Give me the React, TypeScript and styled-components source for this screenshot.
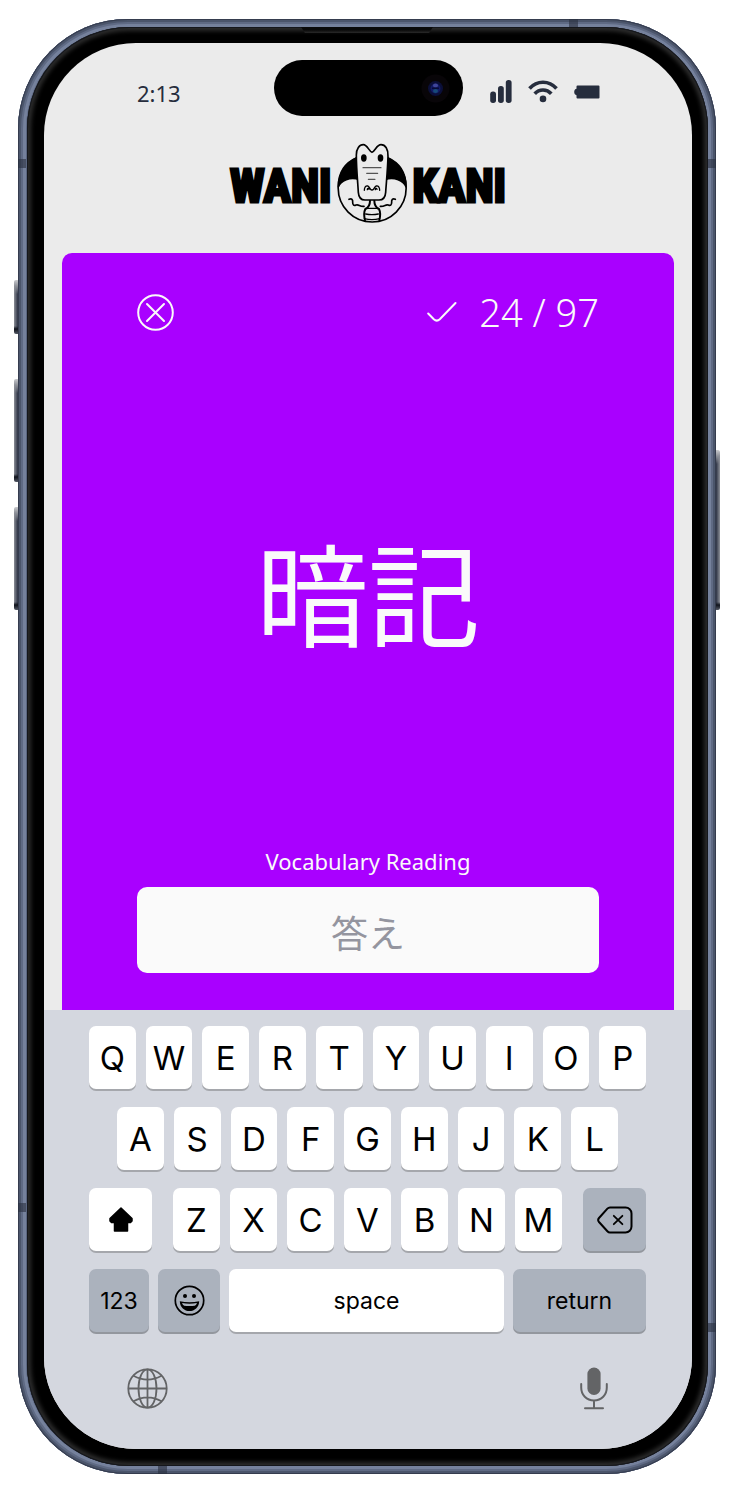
import React from "react";
import styled, { createGlobalStyle } from "styled-components";

const GlobalStyle = createGlobalStyle`
  *, *::before, *::after { box-sizing: border-box; }
  html, body { margin: 0; background: #fff; }
  body { font-family: "Noto Sans", "Noto Sans CJK JP", sans-serif; }
  button, input { font: inherit; border: 0; margin: 0; padding: 0; }
  h1, p { margin: 0; font-weight: 400; }
  svg { display: block; }
`;

const Page = styled.div`
  display: flex;
  min-height: 100vh;
  padding: 19px 19px 26px 18px;
`;

/* ---------- device ---------- */

const Frame = styled.div`
  position: relative;
  flex: 1;
  display: flex;
  padding: 8px 8px 8px 9px;
  border-radius: 110px;
  background: #5b6680;
  box-shadow:
    inset 0 0 0 1px #353c4e,
    inset 0 0 0 3px #4b556b,
    inset 0 0 0 5px #5f6a84,
    inset 0 0 0 8px #75819c;
`;

const Bezel = styled.div`
  flex: 1;
  display: flex;
  padding: 16px 16px 17px 17px;
  border-radius: 102px;
  background: #000;
  box-shadow:
    inset 0 0 0 1px #15171c,
    inset 0 0 4px 4px #2c2c2c;
`;

const Screen = styled.div`
  flex: 1;
  min-width: 0;
  display: flex;
  flex-direction: column;
  overflow: hidden;
  border-radius: 92px;
  background: #ebebeb;
`;

const SideButton = styled.span<{ $side: "left" | "right"; $top: number; $length: number }>`
  position: absolute;
  ${(p) => p.$side}: -4px;
  top: ${(p) => p.$top}px;
  width: 4px;
  height: ${(p) => p.$length}px;
  border-radius: ${(p) => (p.$side === "left" ? "2px 0 0 2px" : "0 2px 2px 0")};
  background: linear-gradient(
      to bottom,
      #c9cacd 0,
      #8d9098 6px,
      transparent 14px,
      transparent calc(100% - 8px),
      #10131c calc(100% - 5px),
      #555a66 100%
    ),
    linear-gradient(to ${(p) => p.$side}, #2c3244, #8c8f97);
`;

const SideBand = styled.span<{ $side: "left" | "right"; $top: number }>`
  position: absolute;
  ${(p) => p.$side}: 0;
  top: ${(p) => p.$top}px;
  width: 8px;
  height: 9px;
  background: rgba(40, 46, 62, 0.6);
`;

const EdgeBand = styled.span<{ $edge: "top" | "bottom"; $left: number }>`
  position: absolute;
  ${(p) => p.$edge}: 0;
  left: ${(p) => p.$left}%;
  width: 9px;
  height: 8px;
  background: rgba(40, 46, 62, 0.6);
`;

const Earpiece = styled.span`
  position: absolute;
  top: 8px;
  left: 50%;
  width: 132px;
  height: 6px;
  transform: translateX(-50%);
  clip-path: polygon(0 0, 100% 0, 97% 100%, 3% 100%);
  background: linear-gradient(#0a0a0a 50%, #2a2a2a);
`;

/* ---------- status bar ---------- */

const StatusBar = styled.header`
  display: grid;
  grid-template-columns: 1fr 189px 1fr;
  align-items: center;
  padding: 17px 92px 0 93px;
  color: #262d3d;
`;

const Clock = styled.time`
  padding-top: 10px;
  font-size: 22px;
  line-height: 32px;
`;

const Island = styled.div`
  display: flex;
  align-items: center;
  justify-content: flex-end;
  height: 56px;
  padding-right: 13px;
  border-radius: 28px;
  background: #000;
`;

const StatusIcons = styled.div`
  display: flex;
  align-items: center;
  justify-content: flex-end;
  gap: 16px;
  padding-top: 7px;
`;

/* ---------- logo ---------- */

const Logo = styled.h1`
  display: flex;
  align-items: center;
  justify-content: center;
  gap: 4px;
  padding: 26px 0 29px;
`;

const LogoWord = styled.span`
  padding-top: 6px;
  font-family: "Roboto Condensed", "Open Sans Condensed", "Noto Sans CJK JP", sans-serif;
  font-size: 46px;
  font-weight: 700;
  line-height: 48px;
  color: #000;
  -webkit-text-stroke: 3px #000;
  stroke-linejoin: round;
`;

/* ---------- review card ---------- */

const Card = styled.main`
  flex: 1;
  display: flex;
  flex-direction: column;
  margin: 0 18px;
  padding: 41px 75px 37px;
  border-radius: 10px 10px 0 0;
  background: #a900ff;
  color: #fafafa;
`;

const CardHeader = styled.div`
  display: flex;
  align-items: center;
  justify-content: space-between;
  height: 36px;
`;

const CloseButton = styled.button`
  background: none;
  color: inherit;
  cursor: pointer;
`;

const Progress = styled.p`
  display: flex;
  align-items: center;
  gap: 22px;
  font-size: 38px;
  font-weight: 300;
  line-height: 36px;
`;

const Prompt = styled.p`
  flex: 1;
  display: flex;
  align-items: center;
  justify-content: center;
  padding-top: 4px;
  font-family: "Noto Sans CJK JP", sans-serif;
  font-size: 112px;
  line-height: 120px;
`;

const AnswerLabel = styled.label`
  margin-bottom: 11px;
  font-size: 22px;
  line-height: 30px;
  text-align: center;
`;

const AnswerInput = styled.input`
  width: 100%;
  height: 86px;
  padding-top: 4px;
  border-radius: 10px;
  background: #fafafa;
  color: #262d3d;
  font-family: "Noto Sans CJK JP", sans-serif;
  font-size: 37px;
  text-align: center;
  outline: none;
  &::placeholder {
    color: #94959f;
    opacity: 1;
  }
`;

/* ---------- keyboard ---------- */

const Keyboard = styled.section`
  display: flex;
  flex-direction: column;
  gap: 18px;
  padding: 16px 46px 39px 45px;
  background: #d4d7df;
  font-family: Inter, sans-serif;
`;

const KeyRow = styled.div<{ $inset?: number; $gap?: number }>`
  display: flex;
  gap: ${(p) => p.$gap ?? 10}px;
  padding: 0 ${(p) => p.$inset ?? 0}px;
`;

const LetterGroup = styled.div`
  flex: 1;
  display: flex;
  gap: 10px;
`;

const Key = styled.button<{ $width?: number; $dark?: boolean; $word?: boolean }>`
  flex: ${(p) => (p.$width ? `0 0 ${p.$width}px` : "1 1 0")};
  min-width: 0;
  display: flex;
  align-items: center;
  justify-content: center;
  height: 63px;
  border-radius: 7px;
  background: ${(p) => (p.$dark ? "#abb2bd" : "#fff")};
  box-shadow: 0 2px 0 ${(p) => (p.$dark ? "#93979e" : "#a5a7ac")};
  color: #000;
  font-size: ${(p) => (p.$word ? 23 : 33)}px;
  cursor: pointer;
`;

const KeyboardFooter = styled.div`
  display: flex;
  align-items: center;
  justify-content: space-between;
  padding: 17px 38px 0;
`;

const IconButton = styled.button`
  background: none;
  color: #636466;
  cursor: pointer;
`;

/* ---------- drawings ---------- */

const Camera = () => (
  <svg width="29" height="29" viewBox="0 0 29 29" aria-hidden="true">
    <circle cx="14.500" cy="14.500" r="14" fill="#080508" />
    <circle cx="14.500" cy="14.500" r="7.500" fill="#0b0f38" />
    <circle cx="14.500" cy="14.500" r="5" fill="#121a66" />
    <ellipse cx="14.500" cy="11.500" rx="2.500" ry="2" fill="#40469a" />
    <ellipse cx="14.500" cy="17" rx="2.500" ry="2" fill="#174a78" />
    <rect x="11" y="13.500" width="7" height="1.500" fill="#080b38" />
  </svg>
);

const SignalIcon = () => (
  <svg width="22" height="23" viewBox="0 0 22 23" fill="currentColor" aria-hidden="true">
    <rect x="0.200" y="11.500" width="5.800" height="11.500" rx="2.700" />
    <rect x="8" y="6" width="5.800" height="17" rx="2.700" />
    <rect x="15.800" y="0" width="5.800" height="23" rx="2.700" />
  </svg>
);

const WifiIcon = () => (
  <svg width="30" height="23" viewBox="0 0 30 23" fill="none" stroke="currentColor" strokeWidth="3.600" aria-hidden="true">
    <path d="M1.500 8.500C9 .2 21 .2 28.500 8.500" />
    <path d="M6.700 13.800c4.600-5 12-5 16.600 0" />
    <circle cx="15" cy="18.900" r="3.300" fill="currentColor" stroke="none" />
  </svg>
);

const BatteryIcon = () => (
  <svg width="26" height="14" viewBox="0 0 26 14" fill="currentColor" aria-hidden="true">
    <path d="M3.500 0.500H24.500a1 1 0 0 1 1 1v11a1 1 0 0 1-1 1H3.500a1 1 0 0 1-1-1V10.200C1.200 10 .2 8.800 .2 7s1-3 2.300-3.200V1.500a1 1 0 0 1 1-1Z" />
  </svg>
);

const Crocodile = () => (
  <svg width="73" height="82" viewBox="350 36 219 246" fill="none" stroke="#000" strokeWidth="5" strokeLinecap="round" strokeLinejoin="round" aria-hidden="true">
    <circle cx="458.500" cy="174" r="102" fill="#ebebeb" />
    <path d="M357 170C357 125 377 98 412 83l8 66C392 138 364 153 357 170Z" fill="#000" />
    <path d="M560 170C560 125 540 98 505 83l-8 66c28-11 56 4 63 21Z" fill="#000" />
    <path d="M389 208c8-4 12 1 11 9 0 9 4 11 10 8 9-3 10 5 24 4M528 208c-8-4-12 1-11 9 0 9-4 11-10 8-9-3-10 5-24 4" />
    <path d="M452 212c0 12-3 20-14 25-5 10-4 22-1 34M465 212c0 12 3 20 14 25 5 10 4 22 1 34" strokeWidth="6" />
    <path d="M441 235h35M439 252q19 4 38 0M435 266q23 6 46 0" strokeWidth="4" />
    <path d="M411 75C411 56 420 44 432 44c12 0 17 20 26 23 9-3 14-23 27-23 13 0 22 13 21 35-1 38-5 78-7 108-1 16-8 23-20 23h-42c-13 0-19-8-20-23-2-33-6-74-6-112Z" fill="#ebebeb" />
    <ellipse cx="433.500" cy="84" rx="6" ry="8.500" fill="#000" />
    <ellipse cx="483.500" cy="84" rx="6" ry="8.500" fill="#000" />
    <path d="M431 113h54M442 130h33M447 148h20" stroke="#555" strokeWidth="3.500" />
    <path d="M435 181c0-9 4-14 10-13 6 1 7 13 13 12 6 1 7-11 13-12 6-1 10 4 10 13M444 179c0-5 4-5 5-1M468 179c0-5 4-5 5-1" strokeWidth="4" />
  </svg>
);

const CloseIcon = () => (
  <svg width="37" height="37" viewBox="0 0 37 37" fill="none" stroke="currentColor" strokeWidth="2" strokeLinecap="round" aria-hidden="true">
    <circle cx="18.500" cy="18.500" r="17.300" />
    <path d="M10 10l17 17M27 10 10 27" />
  </svg>
);

const CheckIcon = () => (
  <svg width="30" height="22" viewBox="0 0 30 22" fill="none" stroke="currentColor" strokeWidth="2" strokeLinecap="round" aria-hidden="true">
    <path d="M1.200 12.500 6.800 18.300Q9.800 21 12.800 18.300L28.500 2" />
  </svg>
);

const ShiftIcon = () => (
  <svg width="24" height="25" viewBox="0 0 24 25" aria-hidden="true">
    <path d="M12 1 23 11.500V14L21.500 15.500H18.500V24H5.500V15.500H2.500L1 14V11.500Z" stroke="#000" strokeWidth="1.500" strokeLinejoin="round" />
  </svg>
);

const DeleteIcon = () => (
  <svg width="36" height="28" viewBox="0 0 36 28" fill="none" stroke="currentColor" strokeWidth="2" strokeLinecap="round" strokeLinejoin="round" aria-hidden="true">
    <path d="M13 1.500H28.500a6 6 0 0 1 6 6v13a6 6 0 0 1-6 6H13Q11.500 26.500 10.400 25.300L2 16Q.3 14 2 12L10.400 2.700Q11.500 1.500 13 1.500Z" />
    <path d="M16.800 9.800l8.600 8.400M25.400 9.800l-8.600 8.400" strokeWidth="1.800" />
  </svg>
);

const SmileIcon = () => (
  <svg width="31" height="31" viewBox="0 0 31 31" aria-hidden="true">
    <circle cx="15.500" cy="15.500" r="14.200" fill="none" stroke="#000" strokeWidth="1.700" />
    <circle cx="11" cy="11" r="2" />
    <circle cx="20" cy="11" r="2" />
    <path d="M5.800 16.200Q15.500 18.500 25.200 16.200C25 22.500 20.500 26 15.500 26S6 22.500 5.800 16.200Z" />
    <path d="M8 18Q15.500 19.600 23 18Q22.300 20.300 20.800 20.700Q15.500 21.500 10.200 20.700Q8.700 20.300 8 18Z" fill="#abb2bd" />
  </svg>
);

const GlobeIcon = () => (
  <svg width="41" height="41" viewBox="0 0 41 41" fill="none" stroke="currentColor" strokeWidth="1.800" aria-hidden="true">
    <circle cx="20.500" cy="20.500" r="19.200" />
    <ellipse cx="20.500" cy="20.500" rx="9" ry="19.200" />
    <path d="M20.500 1.300v38.400M1.300 20.500h38.400M6.500 7.700Q20.500 15.500 34.500 7.700M6.500 33.300Q20.500 25.500 34.500 33.300" />
  </svg>
);

const MicIcon = () => (
  <svg width="28" height="43" viewBox="0 0 28 43" fill="none" stroke="currentColor" strokeWidth="2" strokeLinecap="round" aria-hidden="true">
    <rect x="7.400" y="0.500" width="13.200" height="27.500" rx="6.600" fill="currentColor" stroke="none" />
    <path d="M1.200 17v3.500C1.200 28 6.500 33.500 14 33.500S26.800 28 26.800 20.500V17M14 33.500V41M5 41.200h18" />
  </svg>
);

/* ---------- screen ---------- */

const Letters = ({ keys }: { keys: string }) => (
  <>
    {keys.split("").map((letter) => (
      <Key key={letter} type="button">
        {letter}
      </Key>
    ))}
  </>
);

export default function App() {
  return (
    <>
      <GlobalStyle />
      <Page>
        <Frame>
          <SideButton $side="left" $top={261} $length={54} />
          <SideButton $side="left" $top={360} $length={103} />
          <SideButton $side="left" $top={488} $length={103} />
          <SideButton $side="right" $top={431} $length={160} />
          <SideBand $side="left" $top={140} />
          <SideBand $side="right" $top={140} />
          <SideBand $side="left" $top={1184} />
          <SideBand $side="right" $top={1304} />
          <EdgeBand $edge="top" $left={79} />
          <EdgeBand $edge="bottom" $left={20} />
          <Bezel>
            <Screen>
              <StatusBar>
                <Clock>2:13</Clock>
                <Island>
                  <Camera />
                </Island>
                <StatusIcons>
                  <SignalIcon />
                  <WifiIcon />
                  <BatteryIcon />
                </StatusIcons>
              </StatusBar>
              <Logo>
                <LogoWord>WANI</LogoWord>
                <Crocodile />
                <LogoWord>KANI</LogoWord>
              </Logo>
              <Card>
                <CardHeader>
                  <CloseButton type="button" aria-label="Close">
                    <CloseIcon />
                  </CloseButton>
                  <Progress>
                    <CheckIcon />
                    <span>24 / 97</span>
                  </Progress>
                </CardHeader>
                <Prompt lang="ja">暗記</Prompt>
                <AnswerLabel htmlFor="answer">Vocabulary Reading</AnswerLabel>
                <AnswerInput id="answer" type="text" lang="ja" placeholder="答え" />
              </Card>
              <Keyboard aria-label="Keyboard">
                <KeyRow>
                  <Letters keys="QWERTYUIOP" />
                </KeyRow>
                <KeyRow $inset={28}>
                  <Letters keys="ASDFGHJKL" />
                </KeyRow>
                <KeyRow $gap={21}>
                  <Key type="button" $width={63} aria-label="Shift">
                    <ShiftIcon />
                  </Key>
                  <LetterGroup>
                    <Letters keys="ZXCVBNM" />
                  </LetterGroup>
                  <Key type="button" $width={63} $dark aria-label="Delete">
                    <DeleteIcon />
                  </Key>
                </KeyRow>
                <KeyRow $gap={9}>
                  <Key type="button" $width={60} $dark $word>
                    123
                  </Key>
                  <Key type="button" $width={62} $dark aria-label="Emoji">
                    <SmileIcon />
                  </Key>
                  <Key type="button" $word>
                    space
                  </Key>
                  <Key type="button" $width={133} $dark $word>
                    return
                  </Key>
                </KeyRow>
                <KeyboardFooter>
                  <IconButton type="button" aria-label="Change language">
                    <GlobeIcon />
                  </IconButton>
                  <IconButton type="button" aria-label="Dictate">
                    <MicIcon />
                  </IconButton>
                </KeyboardFooter>
              </Keyboard>
            </Screen>
          </Bezel>
          <Earpiece />
        </Frame>
      </Page>
    </>
  );
}
